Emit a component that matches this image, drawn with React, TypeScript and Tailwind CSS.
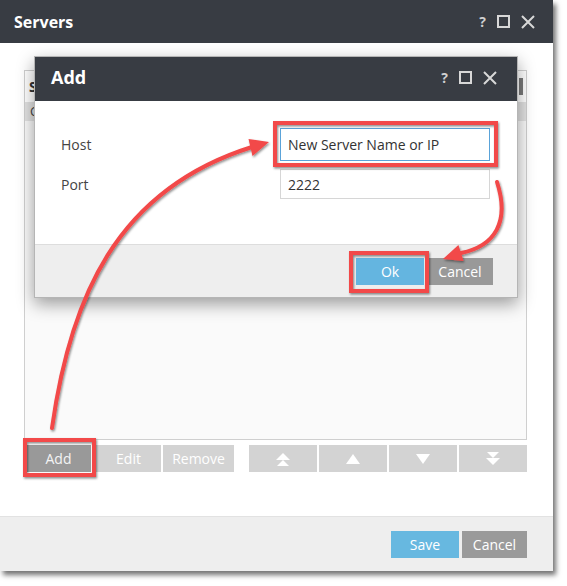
import React from "react";

const TitleIcons = () => (
  <div className="flex items-center gap-[11px] text-[#d0d0d0]">
    <span className="text-[14px] font-bold leading-none">?</span>
    <svg width="13" height="13" viewBox="0 0 13 13">
      <rect x="1" y="1" width="11" height="11" fill="none" stroke="#d8d8d8" strokeWidth="2" />
    </svg>
    <svg width="14" height="14" viewBox="0 0 14 14">
      <path d="M1 1 L13 13 M13 1 L1 13" stroke="#d8d8d8" strokeWidth="2" />
    </svg>
  </div>
);

const Tri = ({ down = false }: { down?: boolean }) => (
  <svg width="14" height="12" viewBox="0 0 14 12">
    {down ? <polygon points="0,1 14,1 7,11" fill="#fff" /> : <polygon points="0,11 14,11 7,1" fill="#fff" />}
  </svg>
);

const DoubleTri = ({ down = false }: { down?: boolean }) => (
  <svg width="14" height="14" viewBox="0 0 14 14">
    {down ? (
      <>
        <polygon points="1,0 13,0 7,6" fill="#fff" />
        <polygon points="0,6 14,6 7,13" fill="#fff" />
      </>
    ) : (
      <>
        <polygon points="1,14 13,14 7,8" fill="#fff" />
        <polygon points="0,8 14,8 7,1" fill="#fff" />
      </>
    )}
  </svg>
);

export default function App() {
  return (
    <div className="relative w-[567px] h-[586px] bg-white overflow-hidden font-['Open_Sans',sans-serif]">
      {/* Outer window */}
      <div className="w-[553px] h-[571px] flex flex-col shadow-[3px_4px_5px_rgba(0,0,0,0.55)]">
        <div className="h-[43px] bg-[#383c43] flex items-center justify-between pl-[14px] pr-[18px]">
          <span className="text-white text-[16px] font-bold">Servers</span>
          <TitleIcons />
        </div>
        <div className="flex-1 bg-white pt-[27px] pl-[24px] pr-[26px] flex flex-col">
          <div className="h-[370px] border border-[#cfcfcf] bg-[#fafafa] flex flex-col">
            <div className="h-[31px] bg-white flex items-center justify-between pl-[4px] pr-[3px]">
              <span className="text-[14px] font-bold text-[#333]">S</span>
              <div className="w-[4px] h-[17px] bg-[#7a7a7a]" />
            </div>
            <div className="h-[19px] bg-[#e2e2e2] flex items-center pl-[5px] text-[13px] text-[#444]">C</div>
          </div>
          <div className="mt-[5px] flex items-center justify-between text-[14px] text-white">
            <div className="flex items-center pl-[2px]">
              <div className="w-[65px] h-[27px] bg-[#999999] flex items-center justify-center text-[#f4f4f4]">Add</div>
              <div className="ml-[5px] w-[65px] h-[27px] bg-[#d3d3d3] flex items-center justify-center">Edit</div>
              <div className="ml-[2px] w-[71px] h-[27px] bg-[#d3d3d3] flex items-center justify-center">Remove</div>
            </div>
            <div className="flex items-center gap-[2px]">
              <div className="w-[68px] h-[27px] bg-[#d3d3d3] flex items-center justify-center"><DoubleTri /></div>
              <div className="w-[68px] h-[27px] bg-[#d3d3d3] flex items-center justify-center"><Tri /></div>
              <div className="w-[68px] h-[27px] bg-[#d3d3d3] flex items-center justify-center"><Tri down /></div>
              <div className="w-[68px] h-[27px] bg-[#d3d3d3] flex items-center justify-center"><DoubleTri down /></div>
            </div>
          </div>
        </div>
        <div className="h-[55px] bg-[#eeeeee] border-t border-[#e2e2e2] flex items-center justify-end pr-[26px] gap-[3px] text-[14px] text-white">
          <div className="w-[68px] h-[27px] bg-[#67b8e0] flex items-center justify-center">Save</div>
          <div className="w-[65px] h-[27px] bg-[#9a9a9a] flex items-center justify-center">Cancel</div>
        </div>
      </div>

      {/* Add dialog */}
      <div className="absolute left-[34px] top-[56px] w-[484px] h-[242px] flex flex-col border border-[#b5b5b5] shadow-[0_6px_16px_rgba(0,0,0,0.38)]">
        <div className="h-[44px] bg-[#383c43] flex items-center justify-between pl-[16px] pr-[20px] pb-[3px]">
          <span className="text-white text-[18px] font-bold">Add</span>
          <TitleIcons />
        </div>
        <div className="flex-1 bg-white pt-[27px] pl-[26px] flex flex-col gap-[8px] text-[14px]">
          <div className="flex items-center">
            <span className="w-[219px] text-[#444]">Host</span>
            <div className="w-[210px] h-[33px] border border-[#5aa3d9] flex items-center pl-[7px] text-[#333]">New Server Name or IP</div>
          </div>
          <div className="flex items-center">
            <span className="w-[219px] text-[#444]">Port</span>
            <div className="w-[210px] h-[30px] border border-[#d6d6d6] flex items-center pl-[7px] text-[#333]">2222</div>
          </div>
        </div>
        <div className="h-[53px] bg-[#eeeeee] border-t border-[#dddddd] flex items-center justify-end pr-[24px] gap-[3px] text-[14px] text-white">
          <div className="w-[68px] h-[27px] bg-[#64b5e0] flex items-center justify-center">Ok</div>
          <div className="w-[66px] h-[27px] bg-[#999999] flex items-center justify-center">Cancel</div>
        </div>
      </div>

      {/* Annotations */}
      <svg className="absolute left-0 top-0 pointer-events-none" width="567" height="586" viewBox="0 0 567 586">
        <defs>
          <filter id="sh" x="-10%" y="-10%" width="120%" height="120%">
            <feDropShadow dx="1" dy="1.5" stdDeviation="1" floodColor="#000" floodOpacity="0.45" />
          </filter>
        </defs>
        <g filter="url(#sh)">
          <rect x="275" y="123" width="221" height="42" fill="none" stroke="#f24848" strokeWidth="4" />
          <rect x="351" y="253" width="76" height="38" fill="none" stroke="#f24848" strokeWidth="4" />
          <rect x="25" y="440" width="69" height="35" fill="none" stroke="#f24848" strokeWidth="4" />
          <path d="M52 428 C70 300 115 190 252 147" fill="none" stroke="#f24848" strokeWidth="4" strokeLinecap="round" />
          <polygon points="269,142 248.5,139 252.5,156" fill="#f24848" />
          <path d="M497 182 C510 222 495 246 461 253" fill="none" stroke="#f24848" strokeWidth="4" strokeLinecap="round" />
          <polygon points="443,259 458.4,245 463.6,261" fill="#f24848" />
        </g>
      </svg>
    </div>
  );
}
